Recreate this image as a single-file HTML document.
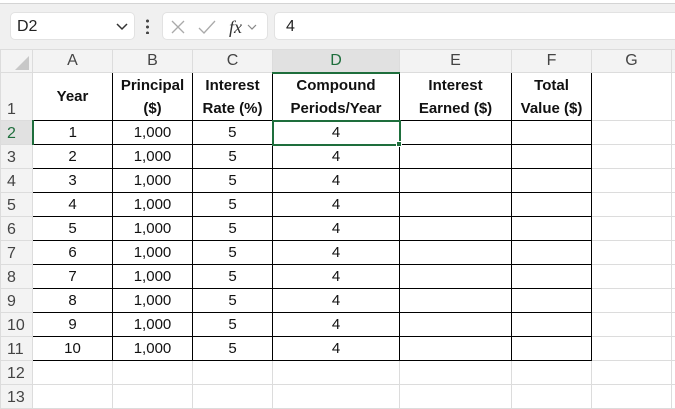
<!DOCTYPE html>
<html><head><meta charset="utf-8"><style>
*{margin:0;padding:0;box-sizing:border-box}
body{width:675px;height:408px;overflow:hidden;background:#fff;font-family:"Liberation Sans",Arial,sans-serif;position:relative}
.top{position:absolute;left:0;top:0;width:675px;height:49px;background:#f0f0f0}
.topw{position:absolute;left:0;top:0;width:675px;height:4px;background:#fff;border-bottom:1px solid #d4d4d4}
.box{position:absolute;background:#fff;border:1px solid #e2e2e2;border-radius:5px;font-size:16px;color:#222}
table{position:absolute;left:0;top:49px;border-collapse:collapse;table-layout:fixed;width:681px}
td{border:1px solid #dcdcdc;text-align:center;font-size:15px;color:#111;height:24px;line-height:20px;padding:0;white-space:nowrap;overflow:hidden;position:relative}
tr.h td{background:#f3f3f3;color:#444;height:23px;font-size:16px}
td.r{background:#f3f3f3;color:#444;text-align:left;padding-left:6px;vertical-align:bottom;font-size:16px}
td.b{border:1px solid #000}
tr.one td.b{font-weight:bold;line-height:23px;height:48px}
</style></head><body>
<div class="top"></div><div class="topw"></div>
<div class="box" style="left:10px;top:12px;width:125px;height:28px;padding:5px 0 0 6px">D2<svg style="position:absolute;right:6px;top:10px" width="12" height="8"><path d="M1 1l5 5 5-5" stroke="#333" stroke-width="1.5" fill="none"/></svg></div>
<div style="position:absolute;left:146px;top:18px;width:3px;height:16px;background:radial-gradient(circle,#444 1.4px,transparent 1.6px) 0 0/3px 6px"></div>
<div class="box" style="left:162px;top:12px;width:106px;height:28px">
<svg width="106" height="28" style="display:block"><path d="M9 8l12 12M21 8L9 20" stroke="#aaa" stroke-width="1.3"/><path d="M36 15l5 5 11-12" stroke="#aaa" stroke-width="1.3" fill="none"/><text x="66" y="20" font-family="Liberation Serif" font-style="italic" font-size="18" fill="#333">fx</text><path d="M85 12l4 4 4-4" stroke="#888" stroke-width="1.2" fill="none"/></svg></div>
<div class="box" style="left:274px;top:12px;width:410px;height:28px;padding:5px 0 0 11px">4</div>
<table>
<colgroup><col style="width:32px"><col style="width:80px"><col style="width:80px"><col style="width:80px"><col style="width:127px"><col style="width:112px"><col style="width:80px"><col style="width:80px"><col style="width:10px"></colgroup>
<tr class="h"><td style="background:#f3f3f3"><svg width="30" height="22" style="position:absolute;left:0;top:0;display:block"><path d="M28 6v14H14z" fill="#c8c8c8"/></svg></td><td>A</td><td>B</td><td>C</td><td style="background:#e1e1e1;color:#1e6e3c;border-bottom:2px solid #1e6e3c">D</td><td>E</td><td>F</td><td>G</td><td></td></tr>
<tr class="one"><td class="r" style="height:48px">1</td><td class="b">Year</td><td class="b">Principal<br>($)</td><td class="b">Interest<br>Rate (%)</td><td class="b">Compound<br>Periods/Year</td><td class="b">Interest<br>Earned ($)</td><td class="b">Total<br>Value ($)</td><td></td><td></td></tr>
<tr><td class="r" style="background:#e1e1e1;color:#1e6e3c;border-right:2px solid #1e6e3c">2</td><td class="b">1</td><td class="b">1,000</td><td class="b">5</td><td class="b" style="border:2px solid #1e6e3c">4</td><td class="b"></td><td class="b"></td><td></td><td></td></tr>
<tr><td class="r">3</td><td class="b">2</td><td class="b">1,000</td><td class="b">5</td><td class="b">4</td><td class="b"></td><td class="b"></td><td></td><td></td></tr>
<tr><td class="r">4</td><td class="b">3</td><td class="b">1,000</td><td class="b">5</td><td class="b">4</td><td class="b"></td><td class="b"></td><td></td><td></td></tr>
<tr><td class="r">5</td><td class="b">4</td><td class="b">1,000</td><td class="b">5</td><td class="b">4</td><td class="b"></td><td class="b"></td><td></td><td></td></tr>
<tr><td class="r">6</td><td class="b">5</td><td class="b">1,000</td><td class="b">5</td><td class="b">4</td><td class="b"></td><td class="b"></td><td></td><td></td></tr>
<tr><td class="r">7</td><td class="b">6</td><td class="b">1,000</td><td class="b">5</td><td class="b">4</td><td class="b"></td><td class="b"></td><td></td><td></td></tr>
<tr><td class="r">8</td><td class="b">7</td><td class="b">1,000</td><td class="b">5</td><td class="b">4</td><td class="b"></td><td class="b"></td><td></td><td></td></tr>
<tr><td class="r">9</td><td class="b">8</td><td class="b">1,000</td><td class="b">5</td><td class="b">4</td><td class="b"></td><td class="b"></td><td></td><td></td></tr>
<tr><td class="r">10</td><td class="b">9</td><td class="b">1,000</td><td class="b">5</td><td class="b">4</td><td class="b"></td><td class="b"></td><td></td><td></td></tr>
<tr><td class="r">11</td><td class="b">10</td><td class="b">1,000</td><td class="b">5</td><td class="b">4</td><td class="b"></td><td class="b"></td><td></td><td></td></tr>
<tr><td class="r">12</td><td></td><td></td><td></td><td></td><td></td><td></td><td></td><td></td></tr>
<tr><td class="r">13</td><td></td><td></td><td></td><td></td><td></td><td></td><td></td><td></td></tr>
</table>
<div style="position:absolute;left:396px;top:141px;width:6px;height:6px;background:#1e6e3c;border:1px solid #fff"></div>
</body></html>
